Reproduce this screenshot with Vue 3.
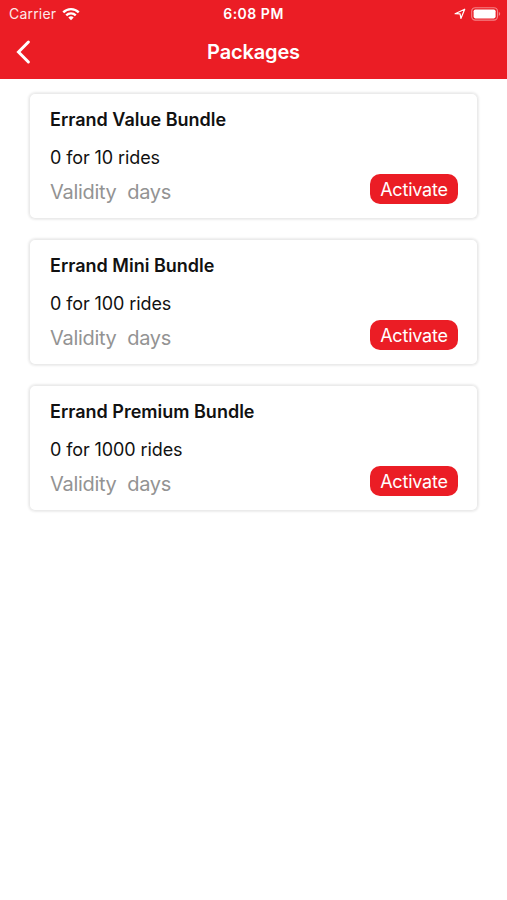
<template>
  <div class="screen">
    <header class="header">
      <div class="status-bar">
        <div class="status-left">
          <span class="carrier">Carrier</span>
          <svg class="wifi" viewBox="0 0 18 14" width="18" height="14">
            <path d="M0.4 4.6a12.2 12.2 0 0 1 17.2 0L15.9 6.2a9.8 9.8 0 0 0-13.8 0z" fill="#fff" />
            <path d="M3.4 7.6a7.9 7.9 0 0 1 11.2 0L12.9 9.2a5.5 5.5 0 0 0-7.8 0z" fill="#fff" />
            <path d="M6.3 10.5a3.8 3.8 0 0 1 5.4 0L9 13.2z" fill="#fff" />
          </svg>
        </div>
        <span class="time">6:08 PM</span>
        <div class="status-right">
          <svg class="location" viewBox="0 0 12 12" width="12" height="12">
            <path d="M1.1 5.7L10.7 1.2L6.9 10.5L6.1 5.9z" fill="none" stroke="#fff" stroke-width="1.2" stroke-linejoin="round" />
          </svg>
          <svg class="battery" viewBox="0 0 30 14" width="30" height="14">
            <rect x="0.7" y="0.7" width="25.8" height="12.4" rx="3.6" fill="none" stroke="#fff" stroke-opacity="0.45" stroke-width="1.1" />
            <rect x="2.6" y="2.4" width="22" height="9" rx="1.8" fill="#fff" />
            <path d="M27.8 4.8c1.9 0.9 1.9 3.3 0 4.2z" fill="#fff" fill-opacity="0.45" />
          </svg>
        </div>
      </div>
      <div class="nav-bar">
        <button class="back" aria-label="Back">
          <svg viewBox="0 0 16 26" width="16" height="26">
            <path d="M13.4 3L3.5 13L13.4 23" fill="none" stroke="#fff" stroke-width="3" stroke-linecap="round" stroke-linejoin="miter" />
          </svg>
        </button>
        <h1 class="nav-title">Packages</h1>
      </div>
    </header>

    <main class="package-list">
      <section v-for="item in packages" :key="item.name" class="package-card">
        <h2 class="package-name">{{ item.name }}</h2>
        <p class="package-rides">{{ item.price }} for {{ item.rides }} rides</p>
        <div class="package-footer">
          <p class="package-validity">Validity&nbsp; days</p>
          <button class="activate">Activate</button>
        </div>
      </section>
    </main>
  </div>
</template>

<script setup>
const packages = [
  { name: 'Errand Value Bundle', price: 0, rides: 10 },
  { name: 'Errand Mini Bundle', price: 0, rides: 100 },
  { name: 'Errand Premium Bundle', price: 0, rides: 1000 }
]
</script>

<style>
body {
  background: #fff;
}
</style>

<style scoped>
.screen {
  min-height: 900px;
  background: #fff;
  font-family: Inter, 'Liberation Sans', sans-serif;
  color: #111;
}

.header {
  box-sizing: border-box;
  height: 79.4px;
  background: #eb1d25;
  color: #fff;
}

.status-bar {
  display: grid;
  grid-template-columns: 1fr auto 1fr;
  align-items: center;
  height: 27px;
  padding: 0 6px 0 9px;
}

.status-left,
.status-right {
  display: flex;
  align-items: center;
}

.status-left {
  gap: 6px;
}

.status-right {
  justify-content: flex-end;
  gap: 5px;
}

.carrier {
  font-size: 14px;
  letter-spacing: 0.2px;
  opacity: 0.9;
}

.time {
  margin-right: 3px;
  font-size: 14px;
  font-weight: 600;
  letter-spacing: 0.5px;
}

.nav-bar {
  display: grid;
  grid-template-columns: 1fr auto 1fr;
  align-items: center;
  height: 50px;
  padding: 0 15px;
}

.back {
  display: flex;
  width: 16px;
  padding: 0;
  border: 0;
  background: none;
}

.nav-title {
  margin: 0;
  font-size: 20px;
  font-weight: 600;
  line-height: 26px;
  letter-spacing: -0.15px;
}

.package-list {
  display: flex;
  flex-direction: column;
  gap: 19.3px;
  padding: 13.6px 29px 0;
}

.package-card {
  box-sizing: border-box;
  height: 126.5px;
  padding: 15px 20px 0 21px;
  border-radius: 6px;
  background: #fff;
  box-shadow: inset 0 0 0 1px #ebebeb, 0 0 3px rgba(0, 0, 0, 0.16);
}

.package-name {
  margin: 0;
  font-size: 18px;
  font-weight: 600;
  line-height: 24px;
}

.package-rides {
  margin: 14px 0 0;
  font-size: 18px;
  line-height: 24px;
  letter-spacing: -0.1px;
}

.package-footer {
  display: flex;
  justify-content: space-between;
  margin-top: 4px;
}

.package-validity {
  margin: 5px 0 0;
  color: #939393;
  font-size: 20px;
  line-height: 26px;
  letter-spacing: -0.3px;
}

.activate {
  width: 88px;
  height: 30.5px;
  padding: 1px 0 0;
  border: 0;
  border-radius: 10px;
  background: #eb1d25;
  color: #fff;
  font-family: inherit;
  font-size: 18px;
  line-height: 30px;
  letter-spacing: -0.2px;
}
</style>
